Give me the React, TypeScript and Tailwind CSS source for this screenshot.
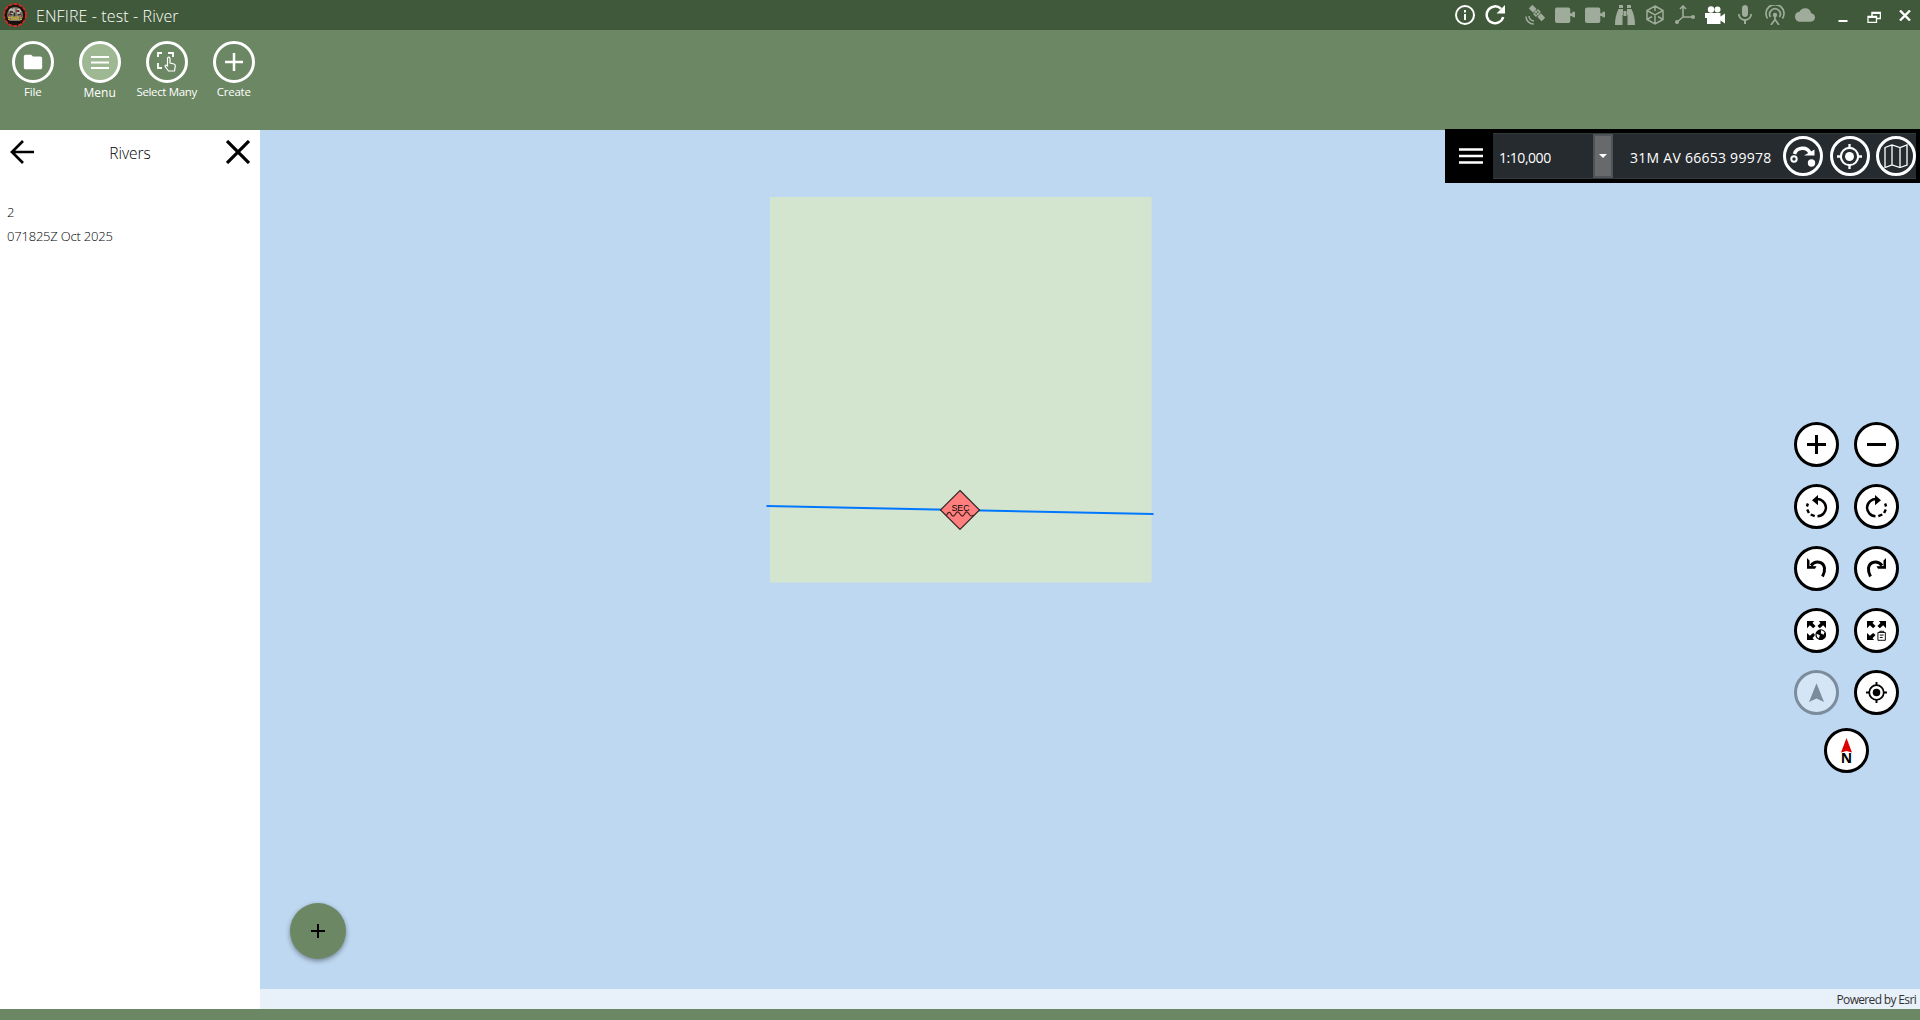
import React from 'react';
import { MdFolder, MdCloud, MdMic } from 'react-icons/md';

type Kids = { children?: React.ReactNode };

function Svg({ w, h = w, box, className = '', children }: Kids & { w: number; h?: number; box?: string; className?: string }) {
  return (
    <svg width={w} height={h} viewBox={box ?? `0 0 ${w} ${h}`} fill="none" stroke="currentColor" strokeWidth={2} className={`shrink-0 ${className}`}>
      {children}
    </svg>
  );
}

function Emblem() {
  return (
    <Svg w={24}>
      <circle cx="12" cy="12" r="11" fill="#17100c" stroke="#c92f24" strokeWidth="1.8" strokeDasharray="4 1" />
      <circle cx="12" cy="12" r="8.500" fill="#7d786c" stroke="#1d1410" strokeWidth="1.2" />
      <path d="M6 8l2-2 2 2M14 7l2-1 2 3M11 5v4M8 10h2M14 10h3" stroke="#c9c5ba" strokeWidth="1.3" />
      <path d="M7 9h3M14 8h2M11.500 10v3M9 12l-3-1M15 12l3-1" stroke="#2b2622" strokeWidth="1.3" />
      <path d="M5 14.500h2.500M5 16.500h2M9 13v4M11 14v3M13 13.500v3.500M15 13v4M17.500 14h2M17 16.500h2" stroke="#d8b62a" strokeWidth="1.2" />
      <path d="M13 8h2M5 12h1M18 13h1" stroke="#a3201c" strokeWidth="1.5" />
      <path d="M7 19h10" stroke="#15100c" />
    </Svg>
  );
}

function StatusIcons() {
  return (
    <div className="flex h-[30px] items-center text-[#9fac9b]">
      <Svg w={20} className="mr-[10px] text-white"><circle cx="10" cy="10" r="9" /><path d="M10 9v6M10 5v2.4" /></Svg>
      <Svg w={20} className="mr-[20px] text-white"><path d="M16 3.8A8.4 8.4 0 1 0 18.2 12" strokeWidth="2.5" /><path d="M20 0v8.5h-8.5z" fill="currentColor" stroke="none" /></Svg>
      <Svg w={20} className="mr-[10px]">
        <g transform="rotate(45 12 8)" fill="currentColor" stroke="none"><rect x="3" y="5.500" width="6" height="5" /><path d="M10 4.500h4v7h-4zM11.200 6v4h1.600V6z" fillRule="evenodd" /><rect x="15" y="5.500" width="6" height="5" /><path d="M3 7.500h18v1H3z" /></g>
        <path d="M1 11.5a7.5 7.5 0 0 0 7.8 7.5M4 11a5 5 0 0 0 5 5" strokeWidth="1.5" />
      </Svg>
      {[0, 1].map((i) => (
        <Svg key={i} w={20} className="mr-[10px]"><path d="M2 2.500h11.500Q15.300 2.500 15.300 4.500V8.200h2V6.800H20v5.400h-2.700v-1.200h-2V16q0 2-1.800 2H2q-2 0-2-2V4.500q0-2 2-2z" fill="currentColor" stroke="none" /></Svg>
      ))}
      <Svg w={20} className="mr-[10px]">
        <g fill="currentColor" stroke="none"><path d="M4 0h4v3H4zM12 0h4v3h-4zM3.500 4H8v6H7.500v10H0q0-9 3.500-16zM16.500 4H12v6h.5v10H20q0-9-3.500-16zM8.500 6h3v5h-3z" /></g>
      </Svg>
      <Svg w={20} className="mr-[10px]"><path d="M10 1l8 4.500v9L10 19l-8-4.500v-9zM2 5.500l8 4.500 8-4.500M10 10v9M10 1v5M2 14.500l5-3M18 14.500l-5-3" strokeWidth="1.500" /></Svg>
      <Svg w={20} className="mr-[10px]"><path d="M8 1v11L2 17M8 12h9M5 4l3-3 3 3" strokeWidth="1.600" /><circle cx="2" cy="17" r="2" fill="currentColor" stroke="none" /><circle cx="18" cy="12" r="2" fill="currentColor" stroke="none" /></Svg>
      <Svg w={20} className="mr-[10px] text-white"><g fill="currentColor" stroke="none"><circle cx="6" cy="4.500" r="3.200" /><circle cx="12.500" cy="4.500" r="3" /><path d="M0 8h15.500v3.500L20 8.500v10l-4.500-3V19H2v-6H0z" /></g></Svg>
      <span className="-ml-[2px] mr-[8px]"><MdMic size={24} /></span>
      <Svg w={20} className="mr-[10px]"><path d="M2.500 13.500A9 9 0 1 1 17.500 13.500M5.500 12a5.300 5.300 0 1 1 9 0M10 11v4M10 14.500L6 20M10 14.500L14 20" strokeWidth="1.700" /><circle cx="10" cy="10" r="2.200" fill="currentColor" stroke="none" /></Svg>
      <MdCloud size={20} />
      <Svg w={10} h={20} className="ml-[23px] text-white"><path d="M.5 16h9" /></Svg>
      <Svg w={14} h={12} className="ml-[19px] mt-[3px] text-white"><path d="M5 5V1.500h8.500v6H10" strokeWidth="1.500" /><path d="M5 2h8" /><path d="M1 5.500h8.500v6H1z" strokeWidth="1.300" /><path d="M1 6h8" /></Svg>
      <Svg w={12} h={11} className="ml-[18px] mr-[9px] mt-[1px] text-white"><path d="M1 .5l10 10M11 .5l-10 10" strokeWidth="2.400" /></Svg>
    </div>
  );
}

function Tool({ label, active, children, text }: Kids & { label: string; active?: boolean; text: string }) {
  return (
    <div className="flex w-[67px] flex-col items-center">
      <div className={`flex size-[42px] items-center justify-center rounded-full border-[3px] border-white ${active ? 'bg-[#9fb894]' : ''}`}>{children}</div>
      <span className={`whitespace-nowrap ${text}`}>{label}</span>
    </div>
  );
}

function Round({ children, faded }: Kids & { faded?: boolean }) {
  return (
    <div className={`flex size-[45px] items-center justify-center rounded-full border-[3px] border-black bg-white text-black ${faded ? 'opacity-35' : ''}`}>{children}</div>
  );
}

function RotateIcon({ flip }: { flip?: boolean }) {
  return (
    <Svg w={23} className={flip ? '-scale-x-100' : ''}>
      <path d="M11 4.200a8.600 8.600 0 1 1 1.500 17.100" strokeWidth="2.500" />
      <path d="M7 5.200L13 0v10.200z" fill="currentColor" stroke="none" />
      <path d="M9.700 21.200l-4-1.700M3.900 18l-1.700-3.500M1.900 11.500l1-3" strokeWidth="2.400" />
    </Svg>
  );
}

function UndoIcon({ flip }: { flip?: boolean }) {
  return (
    <Svg w={21} className={flip ? '-scale-x-100' : ''}>
      <path d="M5 7.500C9.500 1.800 17.500 3.500 18.500 10q.5 4-2 8.500" strokeWidth="3" />
      <path d="M1 0l2.500 2.500V8l7 .2L9 10.800H1z" fill="currentColor" stroke="none" />
    </Svg>
  );
}

const ARROWS = 'M0 0h7.500L5.800 2 9 5.300 6.500 7.500 3 4.500 0 7.500zM20 0h-7.500l1.700 2L11 5.300l2.500 2.200L17 4.500l3 3zM0 20h7.500l-1.700-2L9 14.700l-2.500-2.200L3 15.500l-3-3z';

function TargetIcon({ w = 21 }: { w?: number }) {
  return (
    <Svg w={w} box="0 0 24 24"><circle cx="12" cy="12" r="8.300" /><circle cx="12" cy="12" r="4.300" fill="currentColor" stroke="none" /><path d="M12 0v4M12 20v4M0 12h4M20 12h4" strokeWidth="2.200" /></Svg>
  );
}

function MapButtons() {
  return (
    <div className="absolute right-[21px] top-[292px] flex flex-col items-center">
      <div className="grid grid-cols-2 gap-x-[15px] gap-y-[17px]">
        <Round><Svg w={19}><path d="M9.500 0v19M0 9.500h19" strokeWidth="3" /></Svg></Round>
        <Round><Svg w={19}><path d="M0 9.500h19" strokeWidth="3" /></Svg></Round>
        <Round><RotateIcon /></Round>
        <Round><RotateIcon flip /></Round>
        <Round><UndoIcon /></Round>
        <Round><UndoIcon flip /></Round>
        <Round>
          <Svg w={19} box="0 0 20 20"><path d={ARROWS} fill="currentColor" stroke="none" /><circle cx="14.500" cy="14.500" r="6.500" fill="white" stroke="none" /><circle cx="14.500" cy="14.500" r="5.700" fill="currentColor" stroke="none" /><path d="M15 9.500l3.500 2-1 3-3-1.500zM10 13.500l3.500 1.500-1 3.500-2-2z" fill="white" stroke="none" /></Svg>
        </Round>
        <Round>
          <Svg w={19} h={20} box="0 0 20 21"><path d={ARROWS} fill="currentColor" stroke="none" /><path d="M11.500 12h7.800v8.300h-7.800zM13.500 12v-1.200h4V12M13.500 14.800h4M13.500 17.300h3" strokeWidth="1" /></Svg>
        </Round>
        <Round faded><Svg w={15} h={19} box="0 0 16 20"><path d="M8 0l8 20-8-3.500L0 20z" fill="currentColor" stroke="none" /></Svg></Round>
        <Round><TargetIcon /></Round>
      </div>
      <div className="mt-[13px]">
        <Round>
          <div className="flex flex-col items-center">
            <Svg w={11} h={15}><path d="M5.500 0L11 14.500l-5.500-1.500L0 14.500z" fill="#dc0000" stroke="none" /></Svg>
            <span className="-mt-[1px] h-[12px] text-[14px] font-bold leading-[12px]">N</span>
          </div>
        </Round>
      </div>
    </div>
  );
}

function CoordCircle({ children }: Kids) {
  return <div className="flex size-[40px] shrink-0 items-center justify-center rounded-full border-[3px] border-white">{children}</div>;
}

function CoordinateBar() {
  return (
    <div className="absolute -top-px right-0 flex h-[54px] w-[475px] items-center bg-black pr-[4px] text-white">
      <div className="flex w-[48px] justify-center pl-[4px]"><Svg w={24} h={16}><path d="M0 1.500h24M0 8h24M0 14.500h24" strokeWidth="2.300" /></Svg></div>
      <div className="flex h-[46px] flex-1 items-center border-y border-[#33393c] bg-[#262b2f]">
        <span className="w-[100px] pl-[6px] pt-[2px] text-[14px] tracking-[-0.450px]">1:10,000</span>
        <div className="flex h-full w-[20px] items-center justify-center border-2 border-[#505458] bg-[#68696b]"><Svg w={8} h={4}><path d="M0 0h8L4 4z" fill="currentColor" stroke="none" /></Svg></div>
        <span className="w-[170px] whitespace-nowrap pl-[17px] pt-[2px] text-[14px] tracking-[0.260px]">31M AV 66653 99978</span>
        <div className="flex gap-[6.500px]">
          <CoordCircle>
            <Svg w={26} h={22}><circle cx="4" cy="14" r="2.700" /><circle cx="21.500" cy="18" r="3.700" fill="currentColor" stroke="none" /><path d="M4.500 9C6.500 2 17 1 20 8" strokeWidth="3.500" /><path d="M14 10.500h10.500V4.500z" fill="currentColor" stroke="none" /></Svg>
          </CoordCircle>
          <CoordCircle><TargetIcon w={25} /></CoordCircle>
          <CoordCircle><Svg w={24} h={24}><path d="M1 3.500L8 1l8 2.500L23 1v20l-7 2.500L8 21l-7 2.500zM8 1v20M16 3.500v20" strokeWidth="1.300" /></Svg></CoordCircle>
        </div>
      </div>
    </div>
  );
}

function MapView() {
  return (
    <main className="relative flex flex-1 flex-col bg-[#bed8f1]">
      <Svg w={1660} h={859}>
        <rect x="510" y="67" width="381.500" height="385.500" fill="#d3e5cf" stroke="none" />
        <path d="M506.500 376L893.500 384" stroke="#0077ff" />
        <path d="M700 360.500L719.500 380 700 399.500 680.500 380z" fill="#ff7f7f" stroke="#3a2525" strokeWidth="1.200" />
        <text x="700.500" y="380.800" textAnchor="middle" fill="#000000" stroke="none" fontFamily="Liberation Sans" fontSize="9.500" textLength="18" lengthAdjust="spacingAndGlyphs">SEC</text>
        <path d="M686.500 385.500C688 381.500 690 381.500 691 384S694 387 695.500 384 698.500 381.500 700 384 703 387 704.500 384 707.500 381.500 709 384 712 386.500 713.500 385" stroke="#4a2020" strokeWidth="1.200" />
      </Svg>
      <footer className="flex h-[20px] items-center justify-end bg-[#e8f0fa] pr-[4px] pt-[2px] text-[12px] leading-[18px] tracking-[-0.660px] text-[#323232]">Powered by Esri</footer>
      <CoordinateBar />
      <MapButtons />
      <button className="absolute left-[30px] top-[773px] flex size-[56px] items-center justify-center rounded-full bg-[#6b8763] shadow-[0_2px_5px_rgba(0,0,0,0.4)]">
        <Svg w={14}><path d="M7 0v14M0 7h14" /></Svg>
      </button>
    </main>
  );
}

export default function App() {
  return (
    <div className="flex h-[1020px] w-[1920px] flex-col overflow-hidden bg-[#6b8763] font-['Open_Sans',sans-serif] text-black">
      <header className="flex h-[30px] shrink-0 items-center justify-between bg-[#40593a] text-white">
        <div className="flex items-center pl-[3px]">
          <Emblem />
          <h1 className="ml-[9px] pt-[2px] text-[16px] font-[350] leading-[28px] tracking-[0.120px]">ENFIRE - test - River</h1>
        </div>
        <StatusIcons />
      </header>
      <nav className="-ml-[0.800px] flex h-[100px] shrink-0 pt-[11px] text-white">
        <Tool label="File" text="text-[11.500px] leading-[17px] tracking-[-0.200px]"><MdFolder size={22} /></Tool>
        <Tool label="Menu" active text="text-[12px] leading-[19px]"><Svg w={18} h={13}><path d="M0 1h18M0 6.500h18M0 12h18" /></Svg></Tool>
        <Tool label="Select Many" text="text-[11.500px] leading-[17px] tracking-[-0.350px]">
          <Svg w={20}><path d="M1 5V1h4M11 1h5v4M1 11v5h4" strokeWidth="1.800" /><path d="M10.500 14V6.500q0-1.300 1.200-1.300T13 6.500V11l4 1q1.500.4 1.300 2L17.500 19h-6l-3.300-4.500q-.4-1.600 1-1.300z" strokeWidth="1.200" /></Svg>
        </Tool>
        <Tool label="Create" text="text-[11.500px] leading-[17px] tracking-[-0.200px]"><Svg w={18}><path d="M9 0v18M0 9h18" strokeWidth="2.500" /></Svg></Tool>
      </nav>
      <div className="flex h-[879px] shrink-0">
        <aside className="w-[260px] bg-white text-black">
          <div className="flex h-[44px] items-center justify-between pl-[10px] pr-[10px]">
            <Svg w={24} className="text-black"><path d="M24 12H2M13 1L2 12l11 11" strokeWidth="2.700" /></Svg>
            <h2 className="pt-[3px] text-[15.500px] font-light">Rivers</h2>
            <Svg w={24} className="text-black"><path d="M1 1l22 22M23 1L1 23" strokeWidth="3.200" /></Svg>
          </div>
          <div className="pl-[7px] pt-[26px] text-[13px] font-[350] leading-[24px] tracking-[-0.200px]">
            <p>2</p>
            <p>071825Z Oct 2025</p>
          </div>
        </aside>
        <MapView />
      </div>
    </div>
  );
}
